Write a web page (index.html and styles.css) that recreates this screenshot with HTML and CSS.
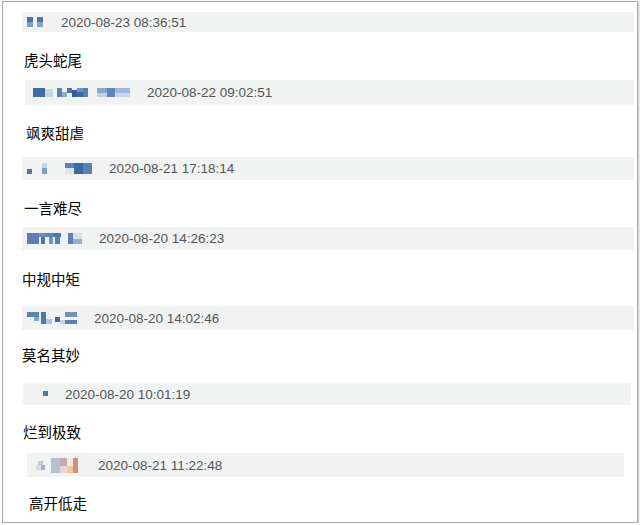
FILE: index.html
```html
<!DOCTYPE html>
<html lang="zh-CN">
<head>
    <meta charset="UTF-8">
    <title>评论</title>
    <link rel="stylesheet" href="styles.css">
</head>
<body>
    <div class="frame">
        <div class="entry">
            <div class="meta">
                <svg class="mosaic" width="17" height="10" viewBox="0 0 17 10">
                    <rect x="0" y="0" width="6" height="5" fill="#4772a8"/>
                    <rect x="0" y="5" width="6" height="5" fill="#7b9cc6"/>
                    <rect x="10" y="0" width="6" height="5" fill="#4a76ab"/>
                    <rect x="10" y="5" width="6" height="5" fill="#86a4cb"/>
                </svg>
                <span class="time">2020-08-23 08:36:51</span>
            </div>
            <p class="review">虎头蛇尾</p>
        </div>
        <div class="entry">
            <div class="meta">
                <svg class="mosaic" width="97" height="9" viewBox="0 0 97 9">
                    <rect x="0" y="0" width="12" height="9" fill="#3f6ea6"/>
                    <rect x="12" y="1" width="8" height="8" fill="#c8d6e8"/>
                    <rect x="24" y="0" width="5" height="9" fill="#5b82b5"/>
                    <rect x="29" y="4" width="5" height="5" fill="#8faacd"/>
                    <rect x="34" y="0" width="5" height="5" fill="#4a76ad"/>
                    <rect x="39" y="2" width="5" height="7" fill="#2f5f9a"/>
                    <rect x="44" y="0" width="6" height="4" fill="#6f92c0"/>
                    <rect x="44" y="4" width="6" height="5" fill="#3f6ba3"/>
                    <rect x="50" y="0" width="5" height="9" fill="#5a80b3"/>
                    <rect x="64" y="0" width="10" height="5" fill="#8aa7cc"/>
                    <rect x="74" y="0" width="8" height="9" fill="#5f86b8"/>
                    <rect x="82" y="0" width="15" height="5" fill="#a1b8d7"/>
                    <rect x="64" y="5" width="10" height="4" fill="#c3d2e6"/>
                    <rect x="82" y="5" width="15" height="4" fill="#c9d7e8"/>
                </svg>
                <span class="time">2020-08-22 09:02:51</span>
            </div>
            <p class="review">飒爽甜虐</p>
        </div>
        <div class="entry">
            <div class="meta">
                <svg class="mosaic" width="65" height="11" viewBox="0 0 65 11">
                    <rect x="0" y="6" width="5" height="5" fill="#4f79ad"/>
                    <rect x="15" y="0" width="5" height="5" fill="#c6d4e7"/>
                    <rect x="15" y="5" width="5" height="6" fill="#7e9ec7"/>
                    <rect x="38" y="0" width="9" height="5" fill="#5a80b3"/>
                    <rect x="47" y="0" width="9" height="11" fill="#3d6aa3"/>
                    <rect x="56" y="0" width="9" height="11" fill="#5b81b4"/>
                    <rect x="38" y="5" width="9" height="6" fill="#dbe4ef"/>
                </svg>
                <span class="time">2020-08-21 17:18:14</span>
            </div>
            <p class="review">一言难尽</p>
        </div>
        <div class="entry">
            <div class="meta">
                <svg class="mosaic" width="55" height="11" viewBox="0 0 55 11">
                    <rect x="0" y="0" width="12" height="11" fill="#5a80b3"/>
                    <rect x="12" y="0" width="6" height="4" fill="#6d90bf"/>
                    <rect x="14" y="4" width="4" height="7" fill="#4a75ab"/>
                    <rect x="18" y="0" width="8" height="4" fill="#5e84b6"/>
                    <rect x="22" y="4" width="4" height="7" fill="#7194c2"/>
                    <rect x="26" y="0" width="8" height="4" fill="#4b77ad"/>
                    <rect x="28" y="4" width="5" height="7" fill="#5a80b3"/>
                    <rect x="41" y="0" width="5" height="11" fill="#5c82b5"/>
                    <rect x="46" y="6" width="9" height="5" fill="#98b1d3"/>
                    <rect x="46" y="0" width="9" height="6" fill="#d6e0ed"/>
                </svg>
                <span class="time">2020-08-20 14:26:23</span>
            </div>
            <p class="review">中规中矩</p>
        </div>
        <div class="entry">
            <div class="meta">
                <svg class="mosaic" width="50" height="12" viewBox="0 0 50 12">
                    <rect x="0" y="0" width="12" height="5" fill="#5e84b6"/>
                    <rect x="7" y="5" width="5" height="4" fill="#86a4cb"/>
                    <rect x="14" y="0" width="5" height="12" fill="#4b77ad"/>
                    <rect x="19" y="7" width="6" height="5" fill="#b3c6df"/>
                    <rect x="28" y="5" width="5" height="5" fill="#3f6ba3"/>
                    <rect x="33" y="8" width="5" height="4" fill="#c3d2e6"/>
                    <rect x="38" y="0" width="12" height="5" fill="#6f92c0"/>
                    <rect x="38" y="8" width="12" height="4" fill="#5a80b3"/>
                </svg>
                <span class="time">2020-08-20 14:02:46</span>
            </div>
            <p class="review">莫名其妙</p>
        </div>
        <div class="entry">
            <div class="meta">
                <svg class="mosaic" width="25" height="6" viewBox="0 0 25 6">
                    <rect x="20" y="0" width="5" height="5" fill="#4c78ad"/>
                </svg>
                <span class="time">2020-08-20 10:01:19</span>
            </div>
            <p class="review">烂到极致</p>
        </div>
        <div class="entry">
            <div class="meta">
                <svg class="mosaic" width="42" height="15" viewBox="0 0 42 15">
                    <rect x="2" y="3" width="5" height="4" fill="#b9cadf"/>
                    <rect x="0" y="7" width="5" height="5" fill="#d2dde9"/>
                    <rect x="5" y="7" width="4" height="5" fill="#9fb6d3"/>
                    <rect x="15" y="0" width="9" height="15" fill="#b2c0d6"/>
                    <rect x="24" y="0" width="7" height="8" fill="#c9a9b8"/>
                    <rect x="24" y="8" width="7" height="7" fill="#e6d7d8"/>
                    <rect x="31" y="0" width="6" height="8" fill="#f3e8e3"/>
                    <rect x="31" y="8" width="6" height="7" fill="#f1c8a3"/>
                    <rect x="37" y="0" width="5" height="15" fill="#d58e74"/>
                </svg>
                <span class="time">2020-08-21 11:22:48</span>
            </div>
            <p class="review">高开低走</p>
        </div>
    </div>
</body>
</html>
```

FILE: styles.css
```css
body {
    margin: 0;
    background: #fff;
    font-family: "Liberation Sans", "Noto Sans CJK SC", sans-serif;
}
.frame {
    box-sizing: border-box;
    width: 636px;
    height: 522px;
    margin: 1px 0 0 2px;
    padding-top: 10px;
    border: 1px solid #a9a9a9;
    box-shadow: 1px 1px 2px rgba(0,0,0,0.25);
    overflow: hidden;
}
.meta {
    display: flex;
    align-items: center;
    gap: 17px;
    height: 20px;
    margin: 0 3px 0 19px;
    padding-left: 5px;
    background-color: #f0f3f2;
    color: #555;
    font-size: 13.5px;
}
.mosaic {
    display: block;
    flex: none;
}
.review {
    margin: 17px 0 9px 21px;
    line-height: 22px;
    font-size: 14.5px;
    color: #000;
    font-family: "Noto Sans CJK SC", sans-serif;
}
.entry:nth-child(2) .meta {
    height: 25px;
    margin-left: 22px;
    padding-left: 8px;
}
.entry:nth-child(2) .review {
    margin-left: 23px;
    margin-bottom: 13px;
}
.entry:nth-child(3) .meta {
    height: 23px;
}
.entry:nth-child(3) .review {
    margin-bottom: 8px;
}
.entry:nth-child(4) .meta {
    height: 23px;
}
.entry:nth-child(4) .review {
    margin: 18px 0 16px 19px;
}
.entry:nth-child(5) .meta {
    height: 24px;
}
.entry:nth-child(5) .review {
    margin: 14px 0 17px 19px;
}
.entry:nth-child(6) .meta {
    height: 22px;
    margin: 0 6px 0 20px;
    padding-left: 0;
}
.entry:nth-child(6) .review {
    margin: 16px 0 10px 20px;
}
.entry:nth-child(7) .meta {
    height: 24px;
    margin: 0 13px 0 24px;
    padding-left: 9px;
    gap: 20px;
}
.entry:nth-child(7) .review {
    margin: 15px 0 0 26px;
}
```
